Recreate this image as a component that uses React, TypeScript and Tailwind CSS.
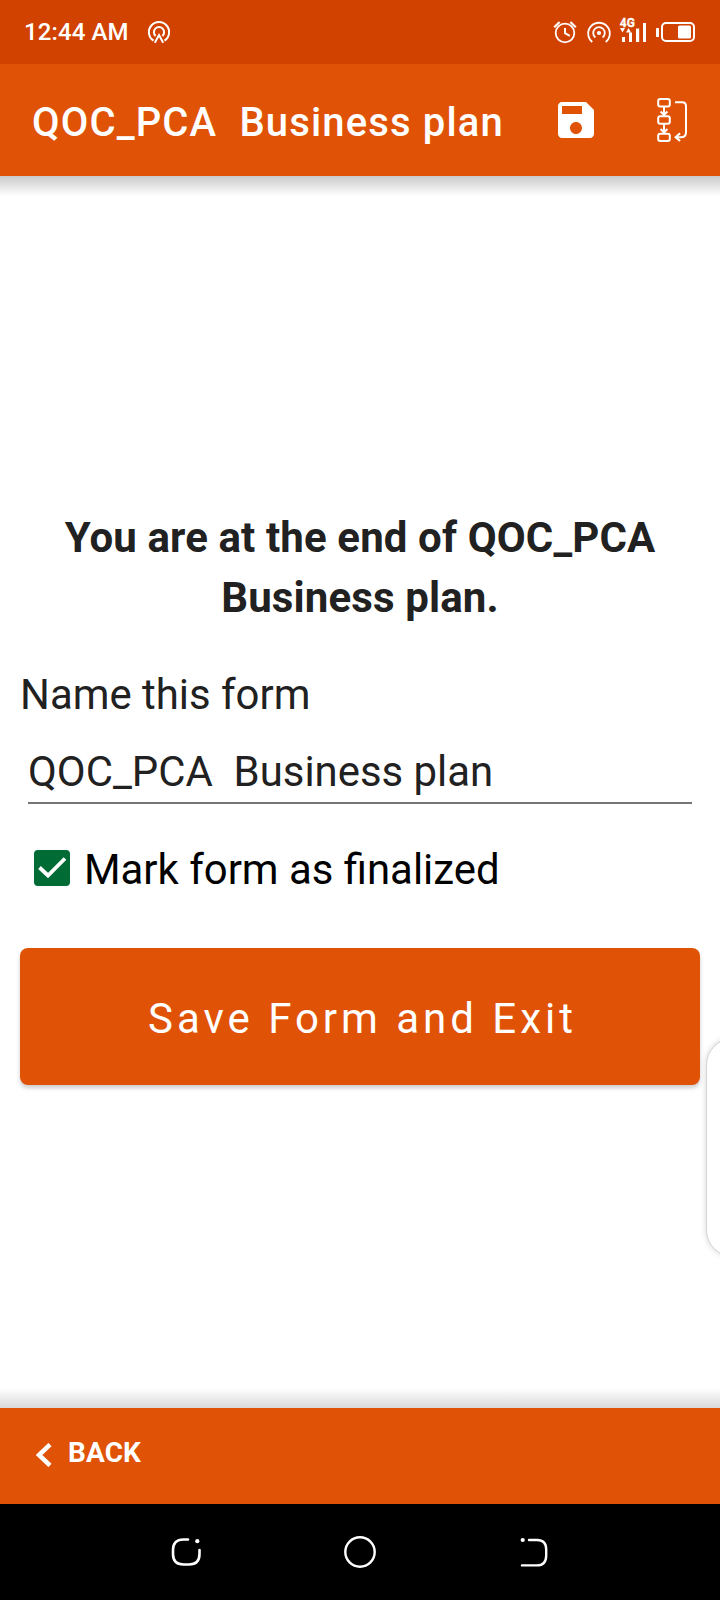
function HotspotIcon() {
  return (
    <svg className="ml-[18px] h-6 w-6" viewBox="0 0 24 24" fill="none" stroke="white" strokeWidth="2">
      <path d="M6.5 20.6A10.1 10.1 0 1 1 17.5 20.6" />
      <path d="M8.6 16A5.1 5.1 0 1 1 15.4 16" />
      <path d="M7.8 22.8 12 15l4.200 7.800" />
    </svg>
  );
}

function StatusIcons() {
  return (
    <svg className="h-8 w-[146px]" viewBox="0 0 146 32" fill="none" stroke="white" strokeWidth="1.8">
      <circle cx="12" cy="17" r="9.300" />
      <path d="M1.200 11.200 6.600 6M22.800 11.200 17.400 6" strokeWidth="2.200" />
      <path d="M12 12v5.200l4.800 2.600" strokeWidth="2" />
      <circle cx="46" cy="17" r="2.100" fill="white" stroke="none" />
      <path d="M42.400 21.500A5.800 5.800 0 1 1 49.600 21.500" />
      <path d="M39.300 26A10.800 10.800 0 1 1 52.700 26" />
      <text x="66.800" y="11.200" fill="white" stroke="white" strokeWidth=".3" fontFamily="Roboto, sans-serif" fontWeight="700" fontSize="13" textLength="15" lengthAdjust="spacingAndGlyphs">4G</text>
      <g fill="white" stroke="none">
        <path d="M67 12h5l-2.500 4.500zM73 16.500h5l-2.500-4.500z" />
        <path d="M69 21h3v5h-3zM76 16.500h3v9.500h-3zM83 12.500h3.200v13.500h-3.200zM90 7h3v19h-3z" />
        <rect x="103" y="12" width="3" height="9" rx=".5" />
        <rect x="125" y="9.500" width="13" height="13" rx="1.500" />
      </g>
      <rect x="109" y="7" width="32" height="18" rx="4" strokeWidth="2" />
    </svg>
  );
}

function SaveIcon() {
  return (
    <svg className="h-9 w-9" viewBox="3 3 18 18" fill="white">
      <path d="M17 3H5c-1.110 0-2 .9-2 2v14c0 1.100.89 2 2 2h14c1.100 0 2-.9 2-2V7l-4-4zm-5 16c-1.660 0-3-1.340-3-3s1.340-3 3-3 3 1.340 3 3-1.340 3-3 3zm3-10H5V5h10v4z" />
    </svg>
  );
}

function JumpIcon() {
  return (
    <svg className="h-[46px] w-[32px]" viewBox="0 0 32 46" fill="none" stroke="white" strokeWidth="2">
      <rect x="2.200" y="2" width="11.600" height="7.400" rx="2" />
      <rect x="2.200" y="19.300" width="11.600" height="7.400" rx="2" />
      <rect x="2.200" y="36.800" width="11.600" height="7.200" rx="2" />
      <path d="M8 9.500v9M4.600 14.500 8 18l3.400-3.500M8 27v9M4.600 32 8 35.500l3.400-3.500" />
      <path d="M19 5.300h7q4 0 4 4v26q0 5-5 5h-5" />
      <path d="M24 36.300 19.700 40.300l4.300 3.700" strokeWidth="2.200" />
    </svg>
  );
}

export default function App() {
  return (
    <div className="relative flex h-[1600px] w-[720px] flex-col overflow-hidden bg-white font-['Roboto',sans-serif] text-[#212121]">
      <div className="flex h-16 shrink-0 items-center bg-[#d14201] pl-6 text-white">
        <span className="w-[105px] text-[24px] leading-8 font-medium tracking-[0.1px] whitespace-nowrap">12:44 AM</span>
        <HotspotIcon />
        <div className="ml-auto pr-[21px]"><StatusIcons /></div>
      </div>

      <header className="z-10 flex h-28 shrink-0 items-center bg-[#e05206] pl-8 text-white">
        <h1 className="w-[526px] pt-1.5 text-[40px] leading-[48px] font-medium tracking-[1.14px] whitespace-pre">{'QOC_PCA  Business plan'}</h1>
        <SaveIcon />
        <div className="ml-[62px]"><JumpIcon /></div>
      </header>
      <div className="h-5 shrink-0 bg-linear-to-b from-[#cbcbcb] to-white" />

      <main className="flex flex-1 flex-col px-5 pt-[312px] text-[41.9px]">
        <h2 className="text-center text-[42px] leading-[60px] font-bold tracking-[0.12px]">You are at the end of QOC_PCA<br />Business plan.</h2>
        <label className="mt-[42px] leading-[50px]">Name this form</label>
        <div className="mx-2 mt-[27px] h-[57px] border-b-2 border-[#757575] leading-[50px] whitespace-pre">{'QOC_PCA  Business plan'}</div>
        <div className="mt-[41px] flex items-center pl-3.5 leading-[50px] text-black">
          <svg className="mr-3.5 mb-1 h-9 w-9 shrink-0" viewBox="0 0 36 36">
            <rect width="36" height="36" rx="4" fill="#006b35" />
            <path d="M5.500 17.500 14 25.500 31 8.500" fill="none" stroke="white" strokeWidth="3.800" />
          </svg>
          Mark form as finalized
        </div>
        <button className="mt-[53px] h-[137px] rounded-[8px] bg-[#e05206] pt-1 pl-[5px] text-[42px] tracking-[3.98px] text-white shadow-[0_3px_4px_rgba(0,0,0,0.2)]">Save Form and Exit</button>
      </main>

      <div className="h-5 shrink-0 bg-linear-to-t from-[#dadada] to-white" />
      <footer className="flex h-24 shrink-0 items-center bg-[#e05206] pl-9 text-white">
        <svg className="mb-0.5 h-6 w-4" viewBox="0 0 16 24" fill="none" stroke="white" strokeWidth="4.500"><path d="M14 1.500 3 12l11 10.500" /></svg>
        <span className="-mt-1.5 ml-4 text-[28px] leading-8 font-bold tracking-[0.1px]">BACK</span>
      </footer>
      <nav className="flex h-24 shrink-0 items-center bg-black pl-[169px]">
        <svg className="h-8 w-8" viewBox="0 0 32 32" fill="none" stroke="white" strokeWidth="2.600" strokeLinecap="round">
          <path d="M19 3.500h-4.500Q4 3.500 4 14v4q0 10.500 10.500 10.500h5.500Q30.500 28.500 30.500 18v-4" />
          <circle cx="28.300" cy="5.200" r="2.100" fill="white" stroke="none" />
        </svg>
        <svg className="ml-[143px] h-8 w-8" viewBox="0 0 32 32" fill="none" stroke="white" strokeWidth="2.400"><circle cx="16" cy="16" r="14.700" /></svg>
        <svg className="ml-[142px] h-8 w-8" viewBox="0 0 32 32" fill="none" stroke="white" strokeWidth="2.400" strokeLinecap="round">
          <circle cx="4.700" cy="4" r="2.100" fill="white" stroke="none" />
          <path d="M11 4h8q9.200 0 9.200 9.500v6q0 9.900-9.200 9.900H4" />
        </svg>
      </nav>

      <div className="absolute top-[1038px] -right-10 h-[219px] w-[54px] rounded-[32px] border border-[#d4d4d4] bg-white shadow-[0_0_6px_rgba(0,0,0,0.16)]" />
    </div>
  );
}
